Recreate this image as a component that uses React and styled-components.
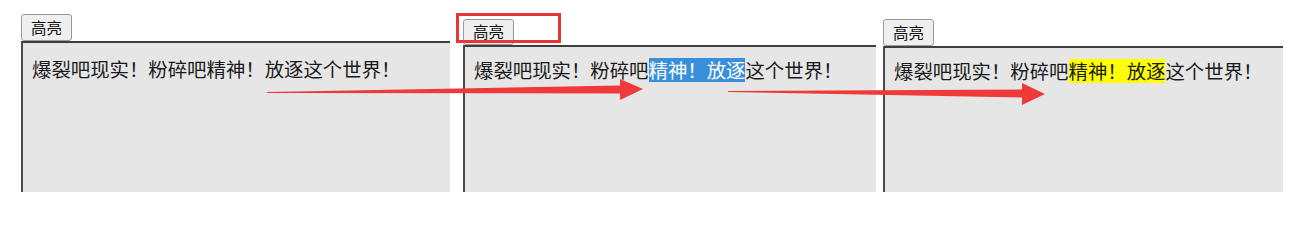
import React from 'react';
import styled, { createGlobalStyle } from 'styled-components';

const GlobalStyle = createGlobalStyle`
  html, body {
    margin: 0;
    padding: 0;
    background: #fff;
  }
  body {
    font-family: "Noto Sans CJK SC", "Noto Sans", sans-serif;
  }
`;

const panels = [
  { offset: 21, width: 429, top: 14, btnH: 27, pad: 14, mode: null },
  { offset: 13, width: 413, top: 19, btnH: 26, pad: 11, mode: 'select', marked: true },
  { offset: 7, width: 400, top: 19, btnH: 27, pad: 11, mode: 'mark' },
];

const App = () => (
  <>
    <GlobalStyle />
    <Page>
      {panels.map((p, i) => (
        <Panel key={i} $offset={p.offset} $width={p.width} $top={p.top}>
          <HighlightButton $h={p.btnH}>高亮</HighlightButton>
          <Editor $pad={p.pad}>
            爆裂吧现实！粉碎吧
            {p.mode ? <Hl $mode={p.mode}>精神！放逐</Hl> : '精神！放逐'}
            这个世界！
          </Editor>
          {p.marked && <Callout />}
        </Panel>
      ))}
      <Arrows viewBox="0 0 1304 215" width="1304" height="215">
        <polygon points="267,92 620,85.5 620,79 643,89 620,100 620,93.5 267,93" />
        <polygon points="728,91 1022,89.5 1022,83 1045,94 1022,105 1022,97.5 728,92" />
      </Arrows>
    </Page>
  </>
);

export default App;

const Page = styled.div`
  position: relative;
  width: 1304px;
  height: 215px;
  display: flex;
  align-items: flex-start;
  overflow: hidden;
`;

const Panel = styled.div`
  position: relative;
  margin-left: ${p => p.$offset}px;
  width: ${p => p.$width}px;
  height: 192px;
  padding-top: ${p => p.$top}px;
  box-sizing: border-box;
  display: flex;
  flex-direction: column;
  align-items: flex-start;
`;

const HighlightButton = styled.button`
  height: ${p => p.$h}px;
  width: 51px;
  padding: 0;
  margin: 0;
  font-family: "Noto Sans CJK SC", sans-serif;
  font-size: 15.5px;
  line-height: 1;
  color: #111;
  background: #efefef;
  border: 1px solid #9a9a9a;
  border-radius: 3px;
  box-sizing: border-box;
`;

const Editor = styled.div`
  align-self: stretch;
  flex: 1;
  background: #e6e6e6;
  border-top: 2px solid #3e3e3e;
  border-left: 2px solid #4a4a4a;
  padding: ${p => p.$pad}px 0 0 9px;
  font-family: "Noto Sans CJK SC", sans-serif;
  font-size: 19.4px;
  line-height: 24px;
  color: #1a1a1a;
  white-space: nowrap;
  overflow: hidden;
`;

const Hl = styled.span`
  display: inline-block;
  height: 24px;
  line-height: 24px;
  vertical-align: top;
  background: ${p => (p.$mode === 'select' ? '#3a8fdc' : '#ffff00')};
  color: ${p => (p.$mode === 'select' ? '#fff' : '#1a1a1a')};
`;

const Callout = styled.div`
  position: absolute;
  left: -7px;
  top: 13px;
  width: 105px;
  height: 30px;
  border: 3px solid #e8353a;
  box-sizing: border-box;
`;

const Arrows = styled.svg`
  position: absolute;
  left: 0;
  top: 0;
  pointer-events: none;
  fill: #f03a3a;
`;
